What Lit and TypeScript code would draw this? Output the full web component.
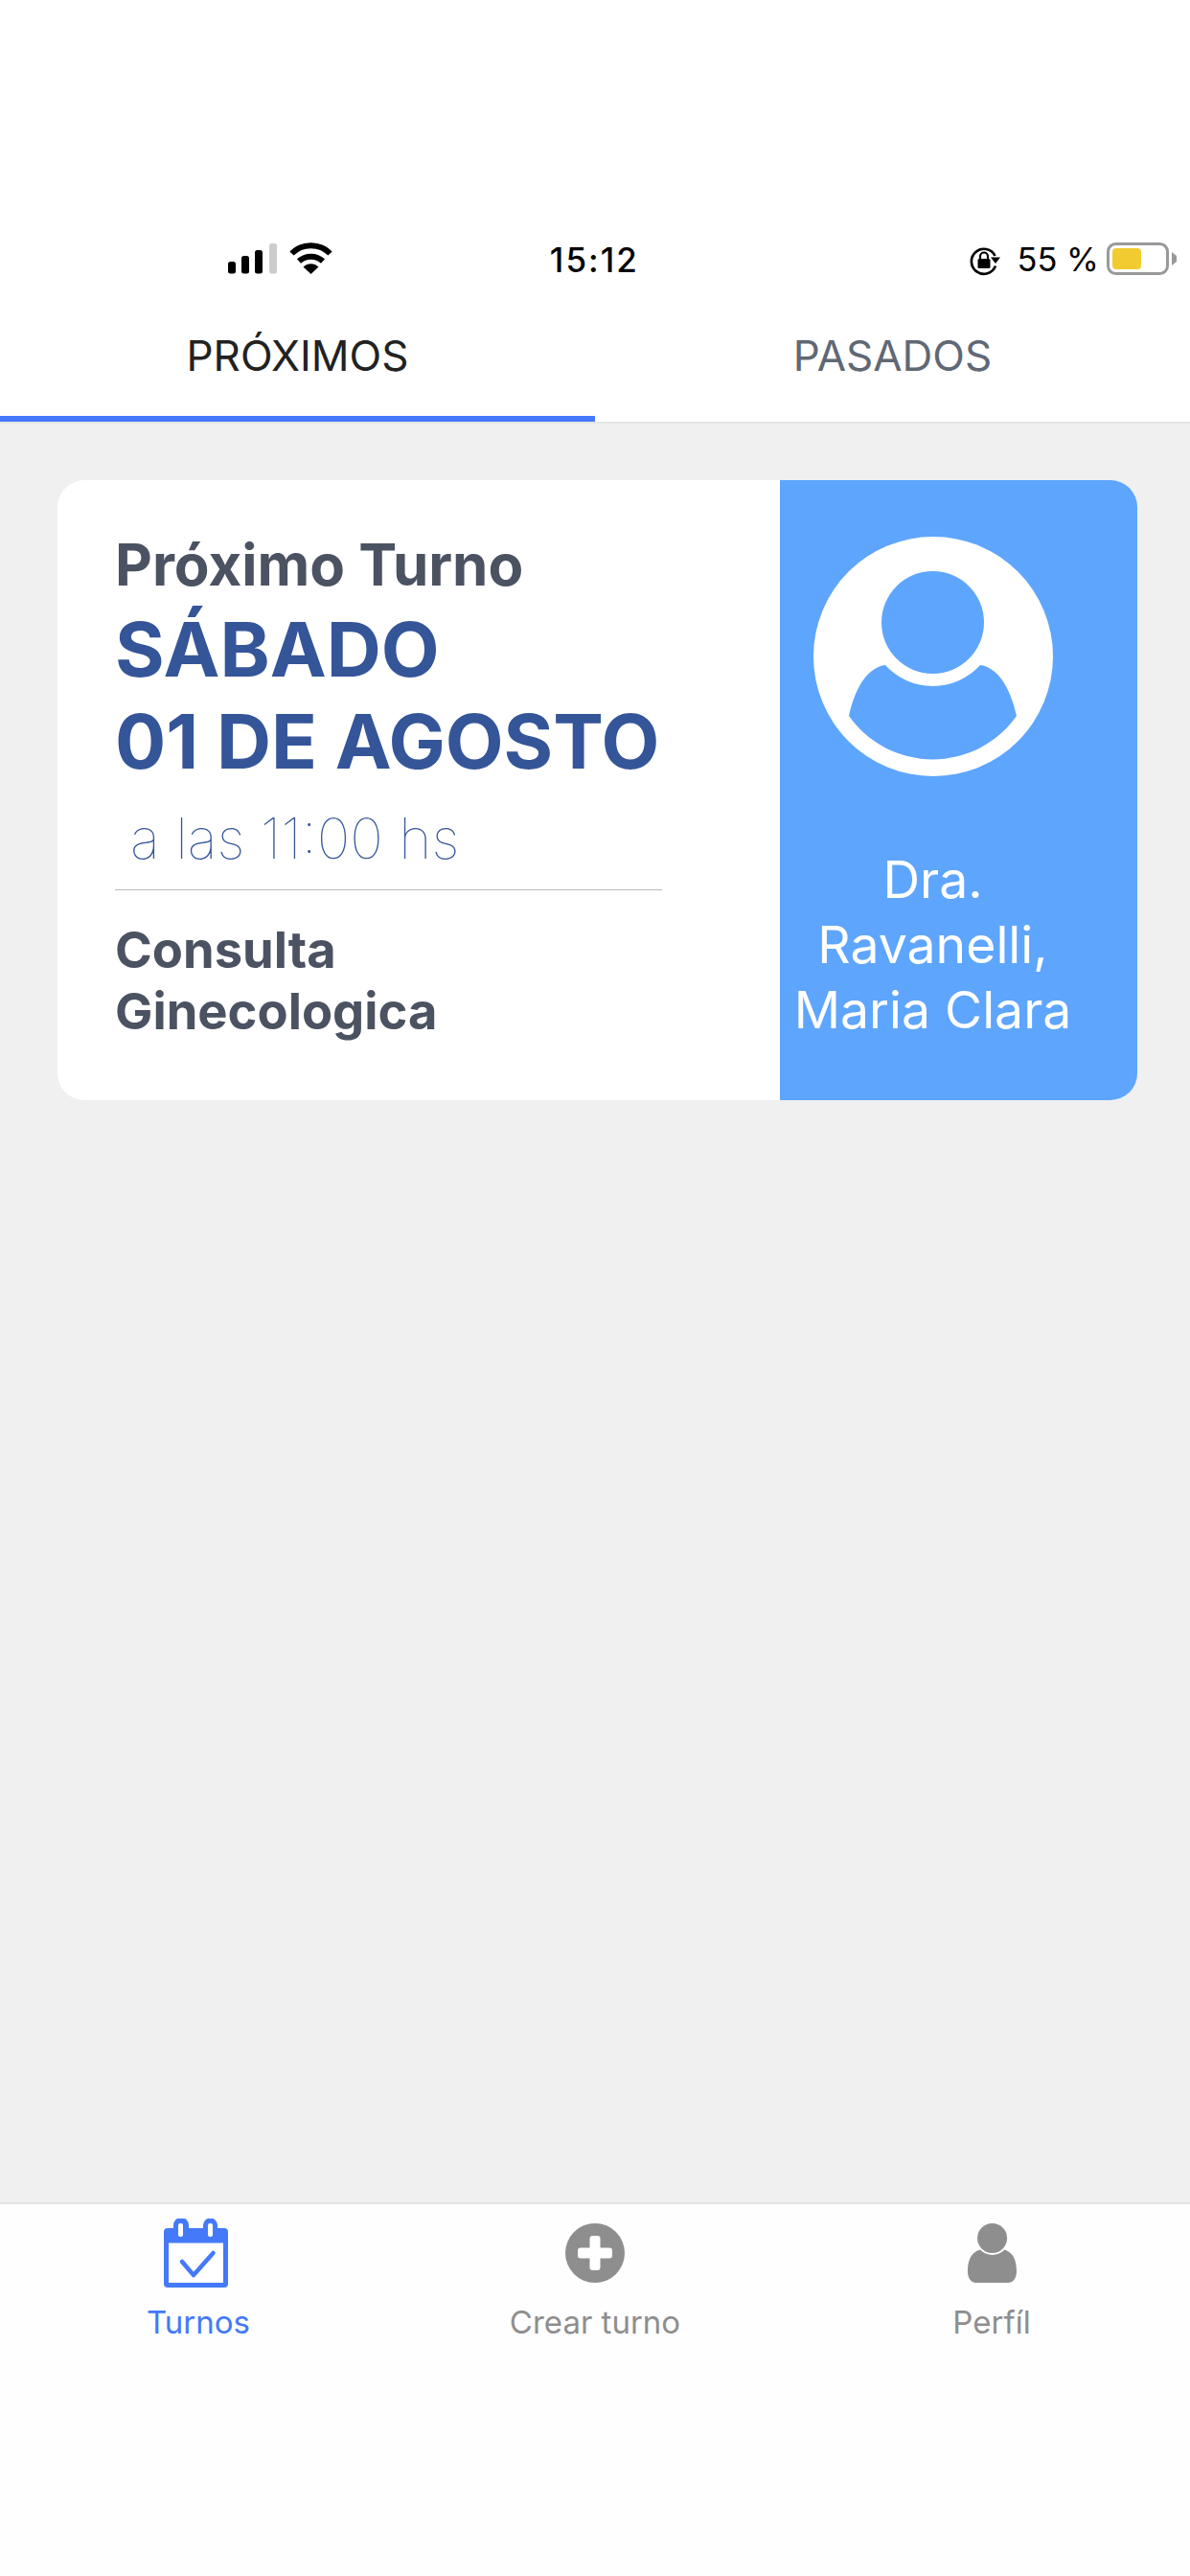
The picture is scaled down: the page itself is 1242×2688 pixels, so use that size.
import { LitElement, html, css } from "lit";
import { customElement } from "lit/decorators.js";

@customElement("app-root")
export class AppRoot extends LitElement {
  static styles = css`
    :host { display: flex; flex-direction: column; width: 1242px; height: 2688px; background: #f0f0f0; font-family: Inter, "Liberation Sans", sans-serif; }
    * { box-sizing: border-box; }
    .top { background: #fff; border-bottom: 2px solid #e4e4e4; height: 442px; display: flex; flex-direction: column; }
    .status { height: 309px; padding: 253px 13px 0 238px; display: flex; align-items: flex-start; color: #000; }
    .st-left { width: 340px; display: flex; gap: 13px; height: 33px; }
    .time { font-size: 35px; font-weight: 500; line-height: 34px; margin-top: 1px; width: 443px; letter-spacing: 2px; }
    .st-right { display: flex; align-items: flex-start; }
    .pct { font-size: 34.5px; line-height: 34px; margin: 1px 8px 0 17px; white-space: pre; }
    .tabs { display: flex; height: 132px; }
    .tab { flex: 1; border-bottom: 6px solid transparent; display: flex; align-items: center; justify-content: center; font-size: 44px; color: #5f6875; }
    .tab.on { border-bottom-color: #4479f9; color: #222; }
    main { flex: 1; padding: 59px 55px 0 60px; }
    .card { display: flex; height: 647px; border-radius: 28px; overflow: hidden; background: #fff; }
    .info { flex: 1; padding: 53px 123px 0 60px; }
    .title { font-size: 60px; line-height: 70px; font-weight: 700; color: #4b5261; white-space: nowrap; }
    .date { margin-top: 5px; font-size: 79px; line-height: 96px; font-weight: 700; color: #355599; white-space: nowrap; }
    .hour { margin: 19px 0 0 16px; font-size: 58.5px; line-height: 70px; font-weight: 100; color: #355599; white-space: nowrap; }
    .rule { margin-top: 18px; height: 1px; background: #b9bcc2; }
    .kind { margin-top: 30px; font-size: 52.5px; line-height: 64px; font-weight: 700; color: #4b5261; }
    .doc { width: 373px; background: #5ea5fd; padding: 59px 54px 0 0; display: flex; flex-direction: column; align-items: center; color: #fff; }
    .avatar { width: 250px; height: 250px; display: block; flex: none; }
    .name { margin-top: 74px; font-size: 53.5px; line-height: 68px; text-align: center; width: 319px; }
    nav { height: 390px; background: #fefefe; border-top: 2px solid #e4e4e4; display: flex; padding-top: 15px; }
    .item { flex: 1; display: flex; flex-direction: column; align-items: center; font-size: 33px; line-height: 41px; color: #8e8e8e; }
    .item.on { color: #4479f9; }
    .ico { height: 72px; display: flex; align-items: center; margin-bottom: 16px; }
    .shift { margin-left: -6px; }
    .lock { margin-top: 3px; }
    svg { display: block; }
  `;

  render() {
    return html`
      <div class="top">
        <div class="status">
          <div class="st-left">
            <svg width="51" height="33" viewBox="0 0 51 33">
              <rect x="0" y="20" width="8" height="12.5" rx="2.5" fill="#000"/>
              <rect x="14" y="14" width="8" height="18.5" rx="2.5" fill="#000"/>
              <rect x="28" y="8" width="8" height="24.5" rx="2.5" fill="#000"/>
              <rect x="43" y="1" width="8" height="31.5" rx="2.5" fill="#ccc"/>
            </svg>
            <svg width="45" height="33" viewBox="0 0 45 33" fill="none" stroke="#000" stroke-width="6">
              <path d="M2.5 11.5C13.5 .5 31.5 .5 42.5 11.5"/>
              <path d="M10 19.5C17 13 28 13 35 19.5"/>
              <path d="M14.5 25.5L22.5 33L30.5 25.5C26 21 19 21 14.5 25.5Z" fill="#000" stroke="none"/>
            </svg>
          </div>
          <div class="time">15:12</div>
          <div class="st-right">
            <svg class="lock" width="33" height="33" viewBox="0 0 33 33">
              <path d="M27.5 11A13 13 0 1 0 28 21.5" fill="none" stroke="#000" stroke-width="2.6"/>
              <path d="M23 12.5H33L28 19Z" fill="#000"/>
              <rect x="9.5" y="14" width="13" height="10" rx="1.5" fill="#000"/>
              <path d="M12 14V11.5a4 4 0 0 1 8 0V14" fill="none" stroke="#000" stroke-width="2.2"/>
            </svg>
            <div class="pct">55 %</div>
            <svg width="74" height="35" viewBox="0 0 74 35">
              <rect x="1.5" y="1.5" width="62" height="31" rx="8" fill="#fff" stroke="#999" stroke-width="3"/>
              <rect x="6" y="6" width="30" height="22" rx="4" fill="#f2cb30"/>
              <path d="M68 10L73 14V20L68 24Z" fill="#999"/>
            </svg>
          </div>
        </div>
        <div class="tabs">
          <div class="tab on">PRÓXIMOS</div>
          <div class="tab">PASADOS</div>
        </div>
      </div>
      <main>
        <div class="card">
          <div class="info">
            <div class="title">Próximo Turno</div>
            <div class="date">SÁBADO<br />01 DE AGOSTO</div>
            <div class="hour">a las 11:00 hs</div>
            <div class="rule"></div>
            <div class="kind">Consulta<br />Ginecologica</div>
          </div>
          <div class="doc">
            <svg class="avatar" viewBox="0 0 250 250">
              <circle cx="125" cy="125" r="125" fill="#fff"/>
              <circle cx="124.5" cy="89.5" r="53.5" fill="#5ea5fd"/>
              <path d="M37 187C44 155 58 136 75 134A66.6 66.6 0 0 0 174 134C191 136 205 155 212 187A107 107 0 0 1 37 187Z" fill="#5ea5fd"/>
            </svg>
            <div class="name">Dra. Ravanelli, Maria Clara</div>
          </div>
        </div>
      </main>
      <nav>
        <div class="item on">
          <div class="ico shift">
            <svg width="67" height="72" viewBox="0 0 67 72">
              <path d="M4 10H10V7a8 8 0 0 1 16 0V10H41V7a7.5 7.5 0 0 1 15 0V10H63a4 4 0 0 1 4 4V68a4 4 0 0 1-4 4H4a4 4 0 0 1-4-4V14a4 4 0 0 1 4-4Z" fill="#4479f9"/>
              <rect x="5" y="25.5" width="57" height="41.5" fill="#fff"/>
              <rect x="15" y="5" width="5" height="14" rx="2" fill="#fff"/>
              <rect x="46" y="5" width="5" height="14" rx="2" fill="#fff"/>
              <path d="M19 45L31 59L51.5 36" fill="none" stroke="#4479f9" stroke-width="4.5" stroke-linecap="round" stroke-linejoin="round"/>
            </svg>
          </div>
          Turnos
        </div>
        <div class="item">
          <div class="ico">
            <svg width="62" height="62" viewBox="0 0 62 62">
              <circle cx="31" cy="31" r="31" fill="#8e8e8e"/>
              <rect x="25.5" y="13" width="11" height="36" rx="3" fill="#fff"/>
              <rect x="13" y="25.5" width="36" height="11" rx="3" fill="#fff"/>
            </svg>
          </div>
          Crear turno
        </div>
        <div class="item">
          <div class="ico">
            <svg width="51" height="62" viewBox="0 0 51 62">
              <circle cx="25.6" cy="15.5" r="15.5" fill="#8e8e8e"/>
              <path d="M0 50C0 38 4 30 13 27.5A17.5 17.5 0 0 0 38.4 27.5C47 30 51 38 51 50C51 58 47 62 42 62H9C4 62 0 58 0 50Z" fill="#8e8e8e"/>
            </svg>
          </div>
          Perfíl
        </div>
      </nav>
    `;
  }
}
